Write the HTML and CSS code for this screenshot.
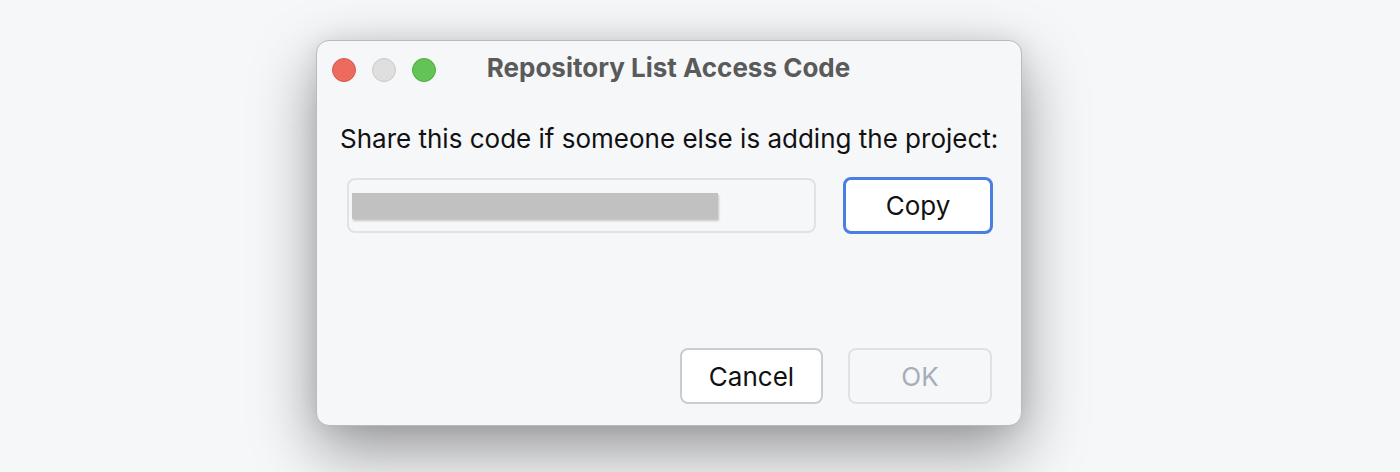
FILE: index.html
```html
<!DOCTYPE html>
<html>
<head>
<meta charset="utf-8">
<link rel="stylesheet" href="styles.css">
</head>
<body>
<div class="stage">
  <div class="window">
    <div class="titlebar">
      <div class="lights">
        <span class="light red"></span>
        <span class="light gray"></span>
        <span class="light green"></span>
      </div>
      <div class="title">Repository List Access Code</div>
      <div></div>
    </div>
    <div class="message">Share this code if someone else is adding the project:</div>
    <div class="code-row">
      <div class="field"><div class="redacted"></div></div>
      <button class="btn copy">Copy</button>
    </div>
    <div class="spacer"></div>
    <div class="footer">
      <button class="btn cancel">Cancel</button>
      <button class="btn ok">OK</button>
    </div>
  </div>
</div>
</body>
</html>
```
FILE: styles.css
```css
html, body {
  margin: 0;
  padding: 0;
  background: #f6f7f9;
  width: 1400px;
  height: 472px;
  overflow: hidden;
  font-family: Inter, "Noto Sans", sans-serif;
}
.stage {
  display: flex;
  padding: 40px 0 0 316px;
}
.window {
  box-sizing: border-box;
  width: 706px;
  height: 386px;
  background: #f6f7f9;
  border: 1px solid #b9babd;
  border-radius: 13px;
  box-shadow: 0 24px 64px rgba(0, 0, 0, 0.40), 0 0 22px rgba(0,0,0,0.08);
  display: flex;
  flex-direction: column;
  padding: 0 28px 21px 23px;
}
.titlebar {
  display: grid;
  grid-template-columns: 1fr auto 1fr;
  align-items: center;
  margin: 15px -12px 0 -8px;
  height: 24px;
}
.lights {
  display: flex;
  gap: 16px;
}
.light {
  box-sizing: border-box;
  width: 24px;
  height: 24px;
  border-radius: 50%;
  border: 1px solid;
}
.red { background: #ec6a5e; border-color: #d25a4e; }
.gray { background: #dfdfdf; border-color: #c8c8c8; }
.green { background: #61c454; border-color: #52ac45; }
.title {
  font-weight: 700;
  font-size: 26px;
  line-height: 24px;
  padding-bottom: 4px;
  color: #5a5a5a;
}
.message {
  margin-top: 44px;
  margin-right: -20px;
  font-size: 26px;
  line-height: 30px;
  color: #111;
  white-space: nowrap;
}
.code-row {
  margin-top: 23px;
  display: flex;
  align-items: center;
  gap: 27px;
  padding-left: 7px;
}
.field {
  box-sizing: border-box;
  width: 469px;
  height: 55px;
  border: 2px solid #e1e2e5;
  border-radius: 8px;
  padding: 13px 3px;
}
.redacted {
  width: 366px;
  height: 26px;
  background: #c1c1c1;
  box-shadow: 1px 2px 2px rgba(0,0,0,0.2);
}
.btn {
  box-sizing: border-box;
  font-family: Inter, "Noto Sans", sans-serif;
  font-size: 26px;
  border-radius: 8px;
  background: #fff;
  color: #111;
  padding: 0;
}
.copy {
  width: 150px;
  height: 57px;
  border: 3px solid #4a7ee3;
}
.spacer { flex: 1; }
.footer {
  display: flex;
  justify-content: flex-end;
  gap: 25px;
  margin-right: 1px;
}
.cancel {
  width: 143px;
  height: 56px;
  border: 2px solid #c9ccd3;
}
.ok {
  width: 144px;
  height: 56px;
  border: 2px solid #e0e2e6;
  background: #f6f7f9;
  color: #a8adba;
}
```
